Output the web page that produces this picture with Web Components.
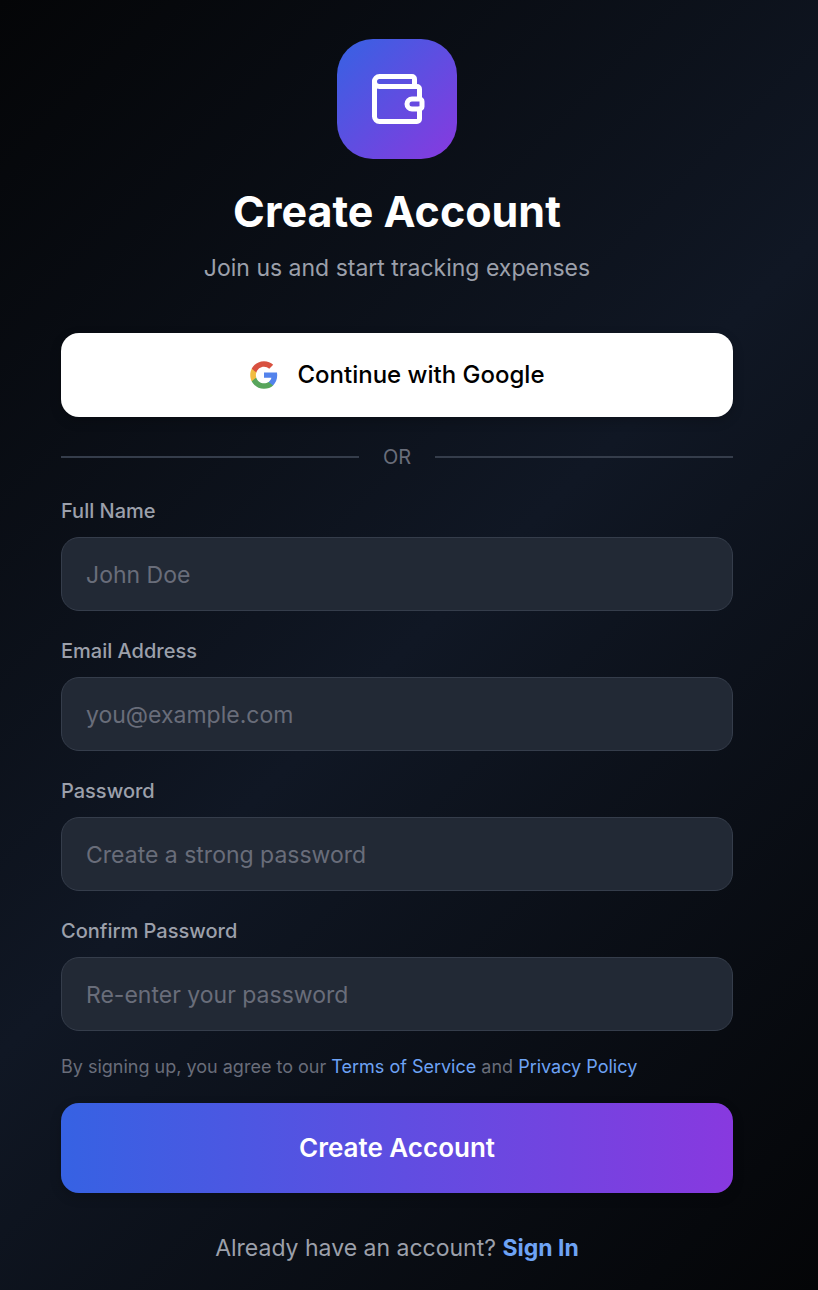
<!DOCTYPE html>
<html lang="en">
<head>
<meta charset="utf-8">
<meta name="viewport" content="width=device-width, initial-scale=1">
<title>Create Account</title>
<style>
  html { min-height: 100%; background: #000; }
  body {
    margin: 0;
    min-height: 100vh;
    font-family: Inter, "Liberation Sans", sans-serif;
    color: #9ca0ab;
    background: linear-gradient(135deg, #040507 0%, #101724 50%, #040507 100%);
    --line: #353d4b;
    --muted: #696d7a;
    --link: #6ea3f5;
    --brand-from: #3662e3;
    --brand-to: #8839df;
    --radius: 18px;
  }
</style>
</head>
<body>
<signup-page></signup-page>

<script>
const define = (name, html, setup) => {
  const template = document.createElement('template');
  template.innerHTML = html;
  customElements.define(name, class extends HTMLElement {
    constructor() {
      super();
      this.attachShadow({ mode: 'open' }).append(template.content.cloneNode(true));
    }
    connectedCallback() { if (setup) setup(this, this.shadowRoot); }
  });
};

define('brand-badge', `
  <style>
    :host { display: flex; align-items: center; justify-content: center; width: 120px; height: 120px;
      border-radius: 36px; background: linear-gradient(135deg, var(--brand-from), var(--brand-to)); }
    svg { width: 60px; height: 60px; display: block; }
  </style>
  <svg viewBox="0 0 24 24" fill="none" stroke="#fff" stroke-width="2" stroke-linecap="round" stroke-linejoin="round" aria-hidden="true">
    <path d="M19 7V4a1 1 0 0 0-1-1H5a2 2 0 0 0 0 4h15a1 1 0 0 1 1 1v4h-3a2 2 0 0 0 0 4h3a1 1 0 0 0 1-1v-2a1 1 0 0 0-1-1"/>
    <path d="M3 5v14a2 2 0 0 0 2 2h15a1 1 0 0 0 1-1v-4"/>
  </svg>`);

define('page-heading', `
  <style>
    :host { display: flex; flex-direction: column; align-items: center; text-align: center; }
    h1 { margin: 25px 0 12px; font-size: 43px; line-height: 54px; font-weight: 700; color: #fff; }
    p { margin: 0; font-size: 23px; line-height: 36px; }
  </style>
  <brand-badge></brand-badge>
  <h1><slot name="title"></slot></h1>
  <p><slot></slot></p>`);

define('google-button', `
  <style>
    :host { display: block; }
    button { display: flex; align-items: center; justify-content: center; gap: 18px; width: 100%; height: 84px;
      border: 0; padding: 0 24px; border-radius: var(--radius); background: #fff; color: #000; cursor: pointer;
      font: 500 24px/36px Inter, "Liberation Sans", sans-serif; box-shadow: 0 4px 12px rgba(0,0,0,.2); }
    svg { width: 30px; height: 30px; }
  </style>
  <button type="button">
    <svg viewBox="0 0 24 24" aria-hidden="true">
      <path fill="#5383ec" d="M22.56 12.25c0-.78-.07-1.53-.2-2.25H12v4.26h5.92c-.26 1.37-1.04 2.53-2.21 3.31v2.77h3.57c2.08-1.92 3.28-4.74 3.28-8.09z"/>
      <path fill="#58a55c" d="M12 23c2.97 0 5.46-.98 7.28-2.66l-3.57-2.77c-.98.66-2.23 1.06-3.71 1.06-2.86 0-5.29-1.93-6.16-4.53H2.18v2.84C3.99 20.53 7.7 23 12 23z"/>
      <path fill="#f1bd42" d="M5.84 14.09c-.22-.66-.35-1.36-.35-2.09s.13-1.43.35-2.09V7.07H2.18C1.43 8.55 1 10.22 1 12s.43 3.45 1.18 4.93l3.66-2.84z"/>
      <path fill="#d85140" d="M12 5.38c1.62 0 3.06.56 4.21 1.64l3.15-3.15C17.45 2.09 14.97 1 12 1 7.7 1 3.99 3.47 2.18 7.07l3.66 2.84c.87-2.6 3.3-4.53 6.16-4.53z"/>
    </svg>
    <span><slot></slot></span>
  </button>`);

define('or-divider', `
  <style>
    :host { display: flex; align-items: center; gap: 24px; font-size: 20px; line-height: 30px; color: var(--muted); }
    i { flex: 1; height: 2px; background: var(--line); }
  </style>
  <i></i><span><slot></slot></span><i></i>`);

define('form-field', `
  <style>
    :host { display: block; }
    label { display: block; margin-bottom: 11px; font-size: 20px; line-height: 30px; font-weight: 500; color: #9ca0ab; }
    input { display: block; box-sizing: border-box; width: 100%; height: 74px; padding: 2px 24px 0; outline: 0;
      border: 1px solid var(--line); border-radius: var(--radius); background: #222935; color: #fff;
      font: 400 23px/34px Inter, "Liberation Sans", sans-serif; }
    input::placeholder { color: var(--muted); opacity: 1; }
    input:focus { border-color: var(--link); }
  </style>
  <label for="control"></label>
  <input id="control">`, (host, root) => {
  root.querySelector('label').textContent = host.getAttribute('label');
  const input = root.querySelector('input');
  input.type = host.getAttribute('type') || 'text';
  input.placeholder = host.getAttribute('placeholder');
});

define('text-link', `
  <style>
    :host { display: inline; }
    a { color: var(--link); text-decoration: none; }
  </style>
  <a href="#"><slot></slot></a>`);

define('submit-button', `
  <style>
    :host { display: block; }
    button { display: block; width: 100%; height: 90px; border: 0; padding: 0 24px; border-radius: var(--radius);
      background: linear-gradient(90deg, var(--brand-from), var(--brand-to)); color: #fff; cursor: pointer;
      font: 600 26px/36px Inter, "Liberation Sans", sans-serif; box-shadow: 0 4px 12px rgba(0,0,0,.2); }
  </style>
  <button type="submit"><slot></slot></button>`);

define('signup-page', `
  <style>
    :host { display: block; padding: 39px 85px 24px 61px; }
    main, form, .fields { display: flex; flex-direction: column; }
    google-button { margin: 47px 0 25px; }
    form { margin-top: 24px; gap: 24px; }
    .fields { gap: 25px; }
    .terms { margin: 0; font-size: 18px; line-height: 24px; color: var(--muted); }
    .account { margin: 37px 0 0; font-size: 23px; line-height: 36px; text-align: center; }
    .account text-link { font-weight: 700; }
  </style>
  <main>
    <page-heading><span slot="title">Create Account</span>Join us and start tracking expenses</page-heading>
    <google-button>Continue with Google</google-button>
    <or-divider>OR</or-divider>
    <form>
      <div class="fields">
        <form-field label="Full Name" placeholder="John Doe"></form-field>
        <form-field label="Email Address" type="email" placeholder="you@example.com"></form-field>
        <form-field label="Password" type="password" placeholder="Create a strong password"></form-field>
        <form-field label="Confirm Password" type="password" placeholder="Re-enter your password"></form-field>
      </div>
      <p class="terms">By signing up, you agree to our <text-link>Terms of Service</text-link> and <text-link>Privacy Policy</text-link></p>
      <submit-button>Create Account</submit-button>
    </form>
    <p class="account">Already have an account? <text-link>Sign In</text-link></p>
  </main>`);
</script>
</body>
</html>
